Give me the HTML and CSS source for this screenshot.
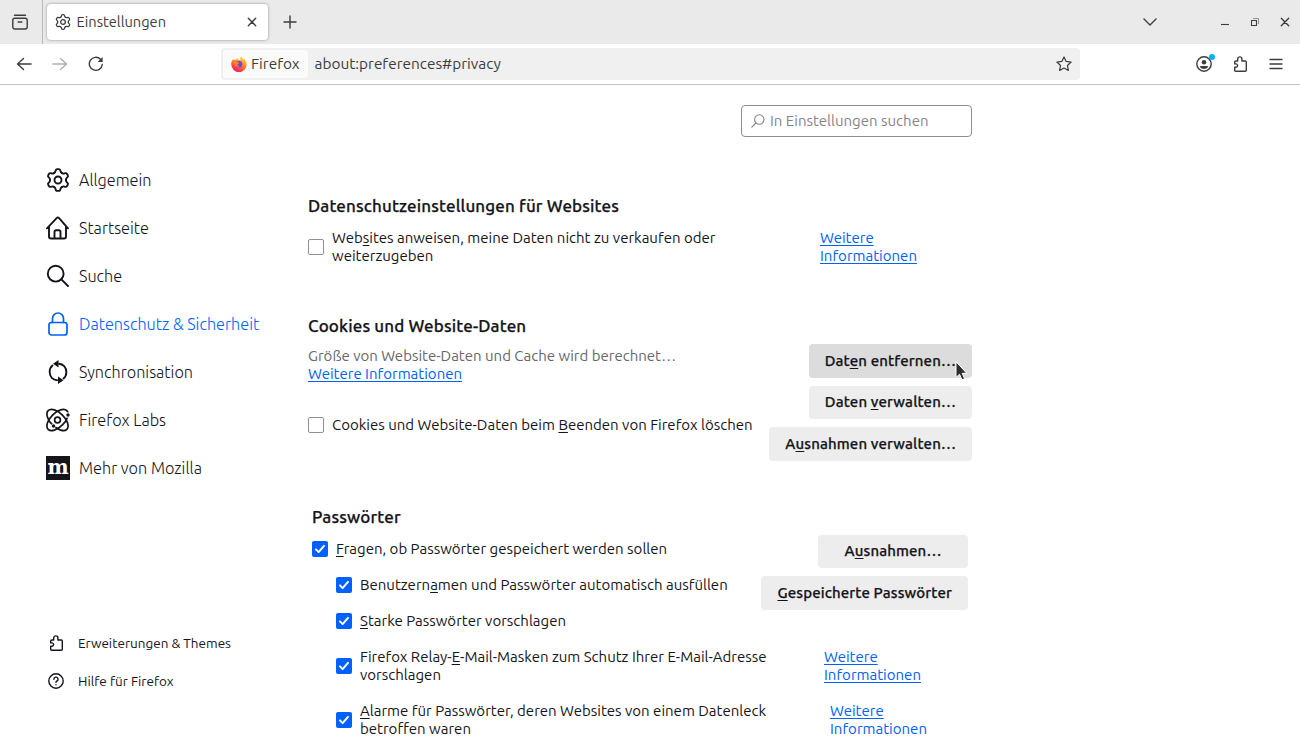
FILE: index.html
```html
<!DOCTYPE html>
<html lang="de">
<head>
<meta charset="utf-8">
<title>Einstellungen</title>
<link rel="stylesheet" href="styles.css">
</head>
<body>
<svg class="defs" width="0" height="0">
  <defs><path id="lobe" d="M8 5.100C8.900 4.600 9.400 4.200 9.500 3.200C9.700 1.800 10.300 1.100 11.300 1.100H12.700C13.700 1.100 14.300 1.800 14.500 3.200C14.600 4.200 15.100 4.600 16 5.100"/></defs>
  <symbol id="gear" viewBox="0 0 24 24"><use href="#lobe"/><use href="#lobe" transform="rotate(60 12 12)"/><use href="#lobe" transform="rotate(120 12 12)"/><use href="#lobe" transform="rotate(180 12 12)"/><use href="#lobe" transform="rotate(240 12 12)"/><use href="#lobe" transform="rotate(300 12 12)"/><circle cx="12" cy="12" r="3.500"/></symbol>
  <symbol id="puzzle" viewBox="0 0 16 16"><path d="M2.700 7.900V6c0-.6.4-1 1-1h2V3a2.100 2.100 0 0 1 4.200 0v2h3.400c.6 0 1 .4 1 1v8.200c0 .6-.4 1-1 1H3.700c-.6 0-1-.4-1-1v-2.900h1.200a1.700 1.700 0 0 0 0-3.400z"/></symbol>
  <symbol id="check" viewBox="0 0 16 16"><path d="M4 8.400l2.600 2.700L12 4.900"/></symbol>
</svg>

<header class="tabbar">
  <div class="view"><svg class="i16" viewBox="0 0 16 16"><rect x=".8" y="4.200" width="14.400" height="10.800" rx="2"/><path d="M2.500 1.200h11M6.200 8h3.600"/></svg></div>
  <div class="tab"><svg class="i16 thick"><use href="#gear"/></svg><span class="tab-label">Einstellungen</span><svg class="close" viewBox="0 0 10 10"><path d="M1.300 1.300l7.400 7.400M8.700 1.300L1.300 8.700"/></svg></div>
  <svg class="plus" viewBox="0 0 14 14"><path d="M7 1v12M1 7h12"/></svg>
  <div class="winctl">
    <svg class="chev" viewBox="0 0 14 8"><path d="M1 1l6 6 6-6"/></svg>
    <svg class="min" viewBox="0 0 10 10"><path d="M1 7.500h8"/></svg>
    <svg class="max" viewBox="0 0 10 10"><path d="M1.500 3.500h5v5h-5z"/><path class="faint" d="M3 1.500h5.500V7"/></svg>
    <svg class="cls" viewBox="0 0 10 10"><path d="M1.300 1.300l7.400 7.400M8.700 1.300L1.300 8.700"/></svg>
  </div>
</header>

<nav class="toolbar">
  <svg class="i16" viewBox="0 0 16 16"><path d="M15 8H1.500M7.500 2.500L1.500 8l6 5.500"/></svg>
  <svg class="i16 dim" viewBox="0 0 16 16"><path d="M1 8h13.500M8.500 2.500l6 5.500-6 5.500"/></svg>
  <svg class="i16" viewBox="0 0 16 16"><path d="M14.300 8.500A6.500 6.500 0 1 1 12.500 3.300"/><path class="solid" d="M14.600 1v5H9.600z"/></svg>
  <div class="urlbar">
    <div class="identity">
      <svg class="fox" viewBox="0 0 16 16">
        <defs><linearGradient id="flame" x1=".8" y1="0" x2=".3" y2="1"><stop offset="0" stop-color="#ffe33a"/><stop offset=".45" stop-color="#ff9020"/><stop offset=".8" stop-color="#ff3a4c"/><stop offset="1" stop-color="#e8167a"/></linearGradient></defs>
        <path fill="url(#flame)" d="M10.200 .2c.2 1.600 1.700 2.200 2.600 3.600.4-.2.400-.7.300-1.100C14.900 4.200 15.800 6.200 15.700 8.400A7.700 7.700 0 0 1 .3 8.600C.1 6.200 1 4.300 2.200 2.900l.6 1.600C3.700 3.700 4.500 3.500 5.200 3.500c.6-.9 1.300-1.200 2-1.300-.6.6-.7 1.200-.6 1.800 1.300-.4 2.400-.2 3.200.3C9.100 2.900 9.200 1.400 10.200.2z"/>
        <circle cx="8" cy="8.300" r="3.300" fill="#7542e5"/><path fill="#ff8a1c" d="M3.200 5.500c1.500-.5 3.100 0 3.600.9.900 0 1.500.1 1.500.6-.2.700-1.300.8-1.800 1.400-.2 1 1 1.600 2.300 1-1 1.800-4 1.500-4.900-.6z"/>
      </svg><span>Firefox</span>
    </div>
    <span>about:preferences#privacy</span>
    <svg class="i16 star" viewBox="0 0 16 16"><path d="M8 .9l2.150 4.550 5 .6-3.700 3.450.95 4.950L8 12l-4.400 2.450.95-4.950L.85 6.050l5-.6z"/></svg>
  </div>
  <div class="tools">
    <div class="account"><svg class="i16" viewBox="0 0 16 16"><circle cx="8" cy="8" r="7.200"/><circle class="solid" cx="8" cy="6.200" r="2.300"/><path class="solid" d="M4.200 10h7.600v1.200c-1.700 2.300-5.900 2.300-7.600 0z"/></svg><i class="dot"></i></div>
    <svg class="i16"><use href="#puzzle"/></svg>
    <svg class="i16 menu" viewBox="0 0 16 16"><path d="M2 3.500h12M2 8h12M2 12.500h12"/></svg>
  </div>
</nav>

<div class="page">
  <aside class="side">
    <ul class="cats">
      <li><svg class="i24"><use href="#gear"/></svg><span>Allgemein</span></li>
      <li><svg class="i24" viewBox="0 0 24 24"><path d="M1 12.300L10.600 2.200c.8-.8 1.700-.8 2.500 0L22 12.300M3 10.500V20.500c0 1.200.8 2 2 2h13c1.200 0 2-.8 2-2v-10M8.500 22v-6.200c0-1 .6-1.600 1.600-1.600h2.800c1 0 1.600.6 1.600 1.600V22"/></svg><span>Startseite</span></li>
      <li><svg class="i24" viewBox="0 0 24 24"><circle cx="9.700" cy="9.700" r="7.900"/><path d="M15.400 15.400l6.600 6.600"/></svg><span>Suche</span></li>
      <li class="on"><svg class="i24 lock" viewBox="0 0 24 24"><rect x="3" y="10.500" width="18" height="12.500" rx="2.500"/><path d="M6.500 10.500V6.500a5.500 5.500 0 0 1 11 0v4"/></svg><span>Datenschutz &amp; Sicherheit</span></li>
      <li><svg class="i24" viewBox="0 0 24 24"><path d="M6.500 5.500C2.800 8.500 2.800 14.500 5.800 17.800c1.500 1.500 3 2.200 5.200 2.400M17.500 18.500c3.700-3 3.700-9 .7-12.300C16.700 4.700 15.200 4 13 3.800"/><path class="solid" d="M12.500 0v7.600L7 3.800zM12 16.400V24l5.500-3.800z"/></svg><span>Synchronisation</span></li>
      <li><svg class="i24 labs" viewBox="0 0 24 24"><ellipse cx="11.500" cy="12" rx="13.200" ry="7" transform="rotate(45 11.500 12)"/><ellipse cx="11.500" cy="12" rx="13.200" ry="7" transform="rotate(-45 11.500 12)"/><circle cx="11.500" cy="12" r="2.900"/><circle class="halo" cx="21.800" cy="7" r="2.800"/><circle class="halo" cx="7.500" cy="18" r="2.300"/><circle class="solid" cx="22" cy="7" r="1.700"/><circle class="solid" cx="7.500" cy="18" r="1.700"/></svg><span>Firefox Labs</span></li>
      <li><span class="moz">m</span><span>Mehr von Mozilla</span></li>
    </ul>
    <ul class="foot">
      <li><svg class="i16"><use href="#puzzle"/></svg><span>Erweiterungen &amp; Themes</span></li>
      <li><svg class="i16" viewBox="0 0 16 16"><circle cx="8" cy="8" r="7.200"/><path d="M5.900 6.300a2.100 2.100 0 1 1 3.200 1.700c-.8.400-1.100.8-1.100 1.300M8 11.600v.2"/></svg><span>Hilfe für Firefox</span></li>
    </ul>
  </aside>

  <main class="main">
    <div class="search"><svg class="mag" viewBox="0 0 14 14"><circle cx="8.300" cy="5.500" r="4.700"/><path d="M4.800 9.100L.8 13.200"/></svg><span>In Einstellungen suchen</span></div>

    <section class="web">
      <h2>Datenschutzeinstellungen für Websites</h2>
      <div class="row">
        <i class="box"></i>
        <p>Web<u>s</u>ites anweisen, meine Daten nicht zu verkaufen oder<br>weiterzugeben</p>
        <a class="link">Weitere<br>Informationen</a>
      </div>
    </section>

    <section class="cookies">
      <h2>Cookies und Website-Daten</h2>
      <div class="split">
        <div class="left">
          <p class="grey">Größe von Website-Daten und Cache wird berechnet…<br><a>Weitere Informationen</a></p>
          <div class="row"><i class="box"></i><p>Cookies und Website-Daten beim <u>B</u>eenden von Firefox löschen</p></div>
        </div>
        <div class="btns">
          <button class="btn hover">Dat<u>e</u>n entfernen…<svg class="cursor" viewBox="0 0 12 20"><path d="M1 1v15.500l3.500-3.200 2.500 5.500 2.600-1.200-2.400-5.300H11.500z"/></svg></button>
          <button class="btn">Daten <u>v</u>erwalten…</button>
          <button class="btn">A<u>u</u>snahmen verwalten…</button>
        </div>
      </div>
    </section>

    <section class="pw">
      <h2>Passwörter</h2>
      <div class="split">
        <div class="left">
          <div class="row"><i class="box on"><svg><use href="#check"/></svg></i><p><u>F</u>ragen, ob Passwörter gespeichert werden sollen</p></div>
          <div class="row sub"><i class="box on"><svg><use href="#check"/></svg></i><p>Benutzern<u>a</u>men und Passwörter automatisch ausfüllen</p></div>
          <div class="row sub"><i class="box on"><svg><use href="#check"/></svg></i><p><u>S</u>tarke Passwörter vorschlagen</p></div>
        </div>
        <div class="btns">
          <button class="btn wide">A<u>u</u>snahmen…</button>
          <button class="btn"><u>G</u>espeicherte Passwörter</button>
        </div>
      </div>
      <div class="row sub two">
        <i class="box on"><svg><use href="#check"/></svg></i>
        <p>Firefox Relay-<u>E</u>-Mail-Masken zum Schutz Ihrer E-Mail-Adresse<br>vorschlagen</p>
        <a class="link">Weitere<br>Informationen</a>
      </div>
      <div class="row sub two last">
        <i class="box on"><svg><use href="#check"/></svg></i>
        <p><u>A</u>larme für Passwörter, deren Websites von einem Datenleck<br>betroffen waren</p>
        <a class="link">Weitere<br>Informationen</a>
      </div>
    </section>
  </main>
</div>
</body>
</html>
```
FILE: styles.css
```css
* { box-sizing: border-box; }
html, body { height: 100%; }
body { margin: 0; overflow: hidden; background: #fff; color: #15141a; font: 15px/18px Ubuntu, "Open Sans", "Noto Sans", sans-serif; }
h2, p, ul { margin: 0; padding: 0; }
ul { list-style: none; }
span, a, h2, p { white-space: nowrap; }
svg { display: block; flex: none; fill: none; stroke: currentColor; stroke-width: 1.4; stroke-linecap: round; stroke-linejoin: round; }
.defs { position: absolute; }
.solid { fill: currentColor; stroke: none; }
.i16 { width: 16px; height: 16px; }
.i24 { width: 24px; height: 24px; stroke-width: 1.9; }
.thick { stroke-width: 1.9; }
.labs { stroke-width: 1.7; overflow: visible; }
.lock { stroke-width: 1.7; }
.halo { fill: #fff; stroke: none; }
u, a { text-decoration: underline; text-decoration-thickness: 1px; text-underline-offset: 2px; text-decoration-skip-ink: none; }

.tabbar { display: flex; align-items: center; height: 44px; background: #eaeaea; color: #3c3c3e; }
.view { display: flex; align-items: center; width: 43px; height: 44px; padding-left: 12px; border-right: 1px solid #b9b9b9; }
.tab { display: flex; align-items: center; gap: 5.500px; width: 221px; height: 36px; margin-left: 4px; padding: 0 11px 0 8px; border-radius: 4px; background: #fff; box-shadow: 0 0 3px rgba(0, 0, 0, .4); }
.tab-label { font-size: 14.650px; }
.close { width: 10px; height: 10px; margin-left: auto; }
.plus { width: 14px; height: 14px; margin-left: 15px; }
.winctl { display: flex; align-items: center; margin-left: auto; padding-right: 10px; }
.chev { width: 14px; height: 8px; margin-right: 63px; }
.min, .max, .cls { width: 10px; height: 10px; }
.min, .max { margin-right: 20px; stroke-linecap: butt; stroke-width: 1.100; }
.faint { opacity: .5; stroke-width: 1; }

.toolbar { display: flex; align-items: center; height: 41px; padding: 0 16px; border-bottom: 1px solid #c4c4c4; color: #3c3c3e; font-size: 15.400px; }
.toolbar > .i16 { margin-right: 20px; }
.dim { opacity: .4; }
.urlbar { display: flex; align-items: center; width: 859px; height: 32px; margin-left: 97px; padding: 0 8px 0 2px; border-radius: 4px; background: #f0f0f0; }
.identity { display: flex; align-items: center; gap: 4px; width: 85px; height: 28px; margin-right: 6.500px; padding-left: 8px; border-radius: 3px; background: #fafafa; }
.fox { width: 16px; height: 16px; stroke: none; }
.star { margin-left: auto; stroke-width: 1.200; }
.tools { display: flex; gap: 20px; margin-left: auto; }
.menu { stroke-width: 1.300; }
.account { position: relative; }
.dot { position: absolute; top: -2px; right: -3px; width: 6px; height: 6px; border-radius: 50%; background: #00b3f4; }

.page { display: flex; height: 651px; }
.side { display: flex; flex-direction: column; justify-content: space-between; width: 308px; padding: 71px 0 36px 46px; }
.cats li { display: flex; align-items: center; gap: 9px; height: 48px; font-size: 16.250px; font-weight: 300; }
.cats .on { color: #0061f5; }
.cats .moz { width: 24px; height: 24px; background: #15141a; color: #fff; text-align: center; font: bold 20px/23px "DejaVu Serif", serif; }
.foot li { display: flex; align-items: center; gap: 14px; height: 38px; padding-left: 2px; font-size: 13.500px; }

.main { width: 664px; }
.search { display: flex; align-items: center; gap: 5px; width: 231px; height: 32px; margin: 20px 0 0 auto; padding-left: 9px; border: 1px solid #8f8f8f; border-radius: 4px; color: #858588; }
.mag { width: 14px; height: 14px; stroke-width: 1.100; }
h2 { font-size: 17px; line-height: 24px; font-weight: 500; letter-spacing: .135px; -webkit-text-stroke: .25px; }
.web { margin-top: 57px; }
.row { display: flex; align-items: center; }
.web .row { height: 36px; margin-top: 11px; }
.box { display: block; flex: none; width: 16px; height: 16px; margin-right: 8px; border: 1px solid #8f8f9d; border-radius: 2px; }
.box.on { border: 0; background: #0061fe; color: #fff; }
.box svg { width: 16px; height: 16px; stroke-width: 2; }
.link, .grey a { color: #0061f5; }
.web .link { width: 152px; margin-left: auto; }

.cookies { margin-top: 49px; }
.split { display: flex; justify-content: space-between; }
.grey { color: #67676c; }
.cookies .left { padding-top: 9px; }
.cookies .left .row { margin-top: 33px; }
.btns { display: flex; flex-direction: column; align-items: flex-end; gap: 8px; margin-top: 6px; }
.btn { position: relative; height: 33.500px; padding: 0 16px; border: 0; border-radius: 4px; background: #ededed; color: inherit; font: 500 15px/18px Ubuntu, "Open Sans", "Noto Sans", sans-serif; letter-spacing: .12px; -webkit-text-stroke: .25px; white-space: nowrap; }
.btn.hover { background: #dcdcdc; }
.btn.wide { width: 150px; }
.cursor { position: absolute; left: 146px; top: 17px; width: 12px; height: 20px; fill: #2d2d2d; stroke: #fff; stroke-width: 1; }

.pw { margin-top: 44px; padding: 0 4px; }
.pw .left { display: flex; flex-direction: column; gap: 18px; padding-top: 11px; }
.sub { padding-left: 24px; }
.two { height: 36px; margin-top: 18px; }
.two .link { width: 144px; margin-left: auto; }
.last .link { width: 138px; }
```
